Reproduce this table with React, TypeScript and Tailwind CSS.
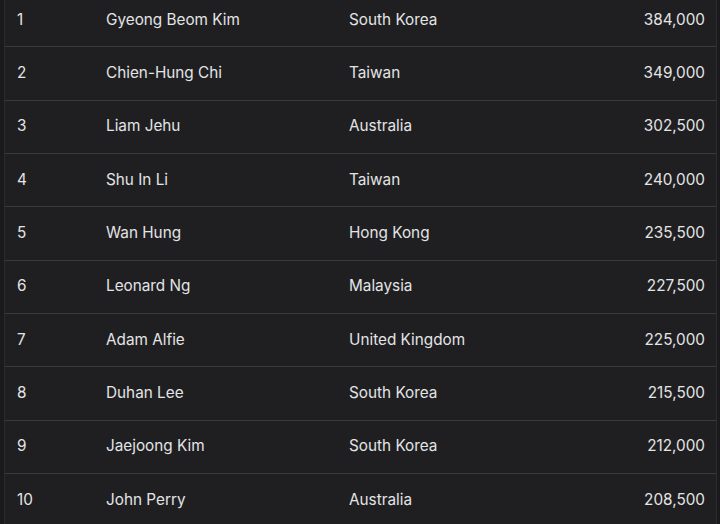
const players = [
  { rank: 1, name: 'Gyeong Beom Kim', country: 'South Korea', prize: '384,000' },
  { rank: 2, name: 'Chien-Hung Chi', country: 'Taiwan', prize: '349,000' },
  { rank: 3, name: 'Liam Jehu', country: 'Australia', prize: '302,500' },
  { rank: 4, name: 'Shu In Li', country: 'Taiwan', prize: '240,000' },
  { rank: 5, name: 'Wan Hung', country: 'Hong Kong', prize: '235,500' },
  { rank: 6, name: 'Leonard Ng', country: 'Malaysia', prize: '227,500' },
  { rank: 7, name: 'Adam Alfie', country: 'United Kingdom', prize: '225,000' },
  { rank: 8, name: 'Duhan Lee', country: 'South Korea', prize: '215,500' },
  { rank: 9, name: 'Jaejoong Kim', country: 'South Korea', prize: '212,000' },
  { rank: 10, name: 'John Perry', country: 'Australia', prize: '208,500' },
];

export default function App() {
  return (
    <div className="h-[524px] w-[720px] overflow-hidden bg-[#1a1a1c] font-['Inter',sans-serif] text-[15.3px] text-[#e4e4e6]">
      <div className="-mt-[6px] ml-[4px] mr-[3px] border-x border-[#2c2c2f] bg-[#1f1f21]">
        {players.map((p) => (
          <div
            key={p.rank}
            className="flex h-[53.33px] items-center border-b border-[#3a3a3d] last:border-b-0"
          >
            <div className="w-[101px] pl-[12px]">{p.rank}</div>
            <div className="w-[243px]">{p.name}</div>
            <div className="flex-1">{p.country}</div>
            <div className="pr-[11px] text-right">{p.prize}</div>
          </div>
        ))}
      </div>
    </div>
  );
}
